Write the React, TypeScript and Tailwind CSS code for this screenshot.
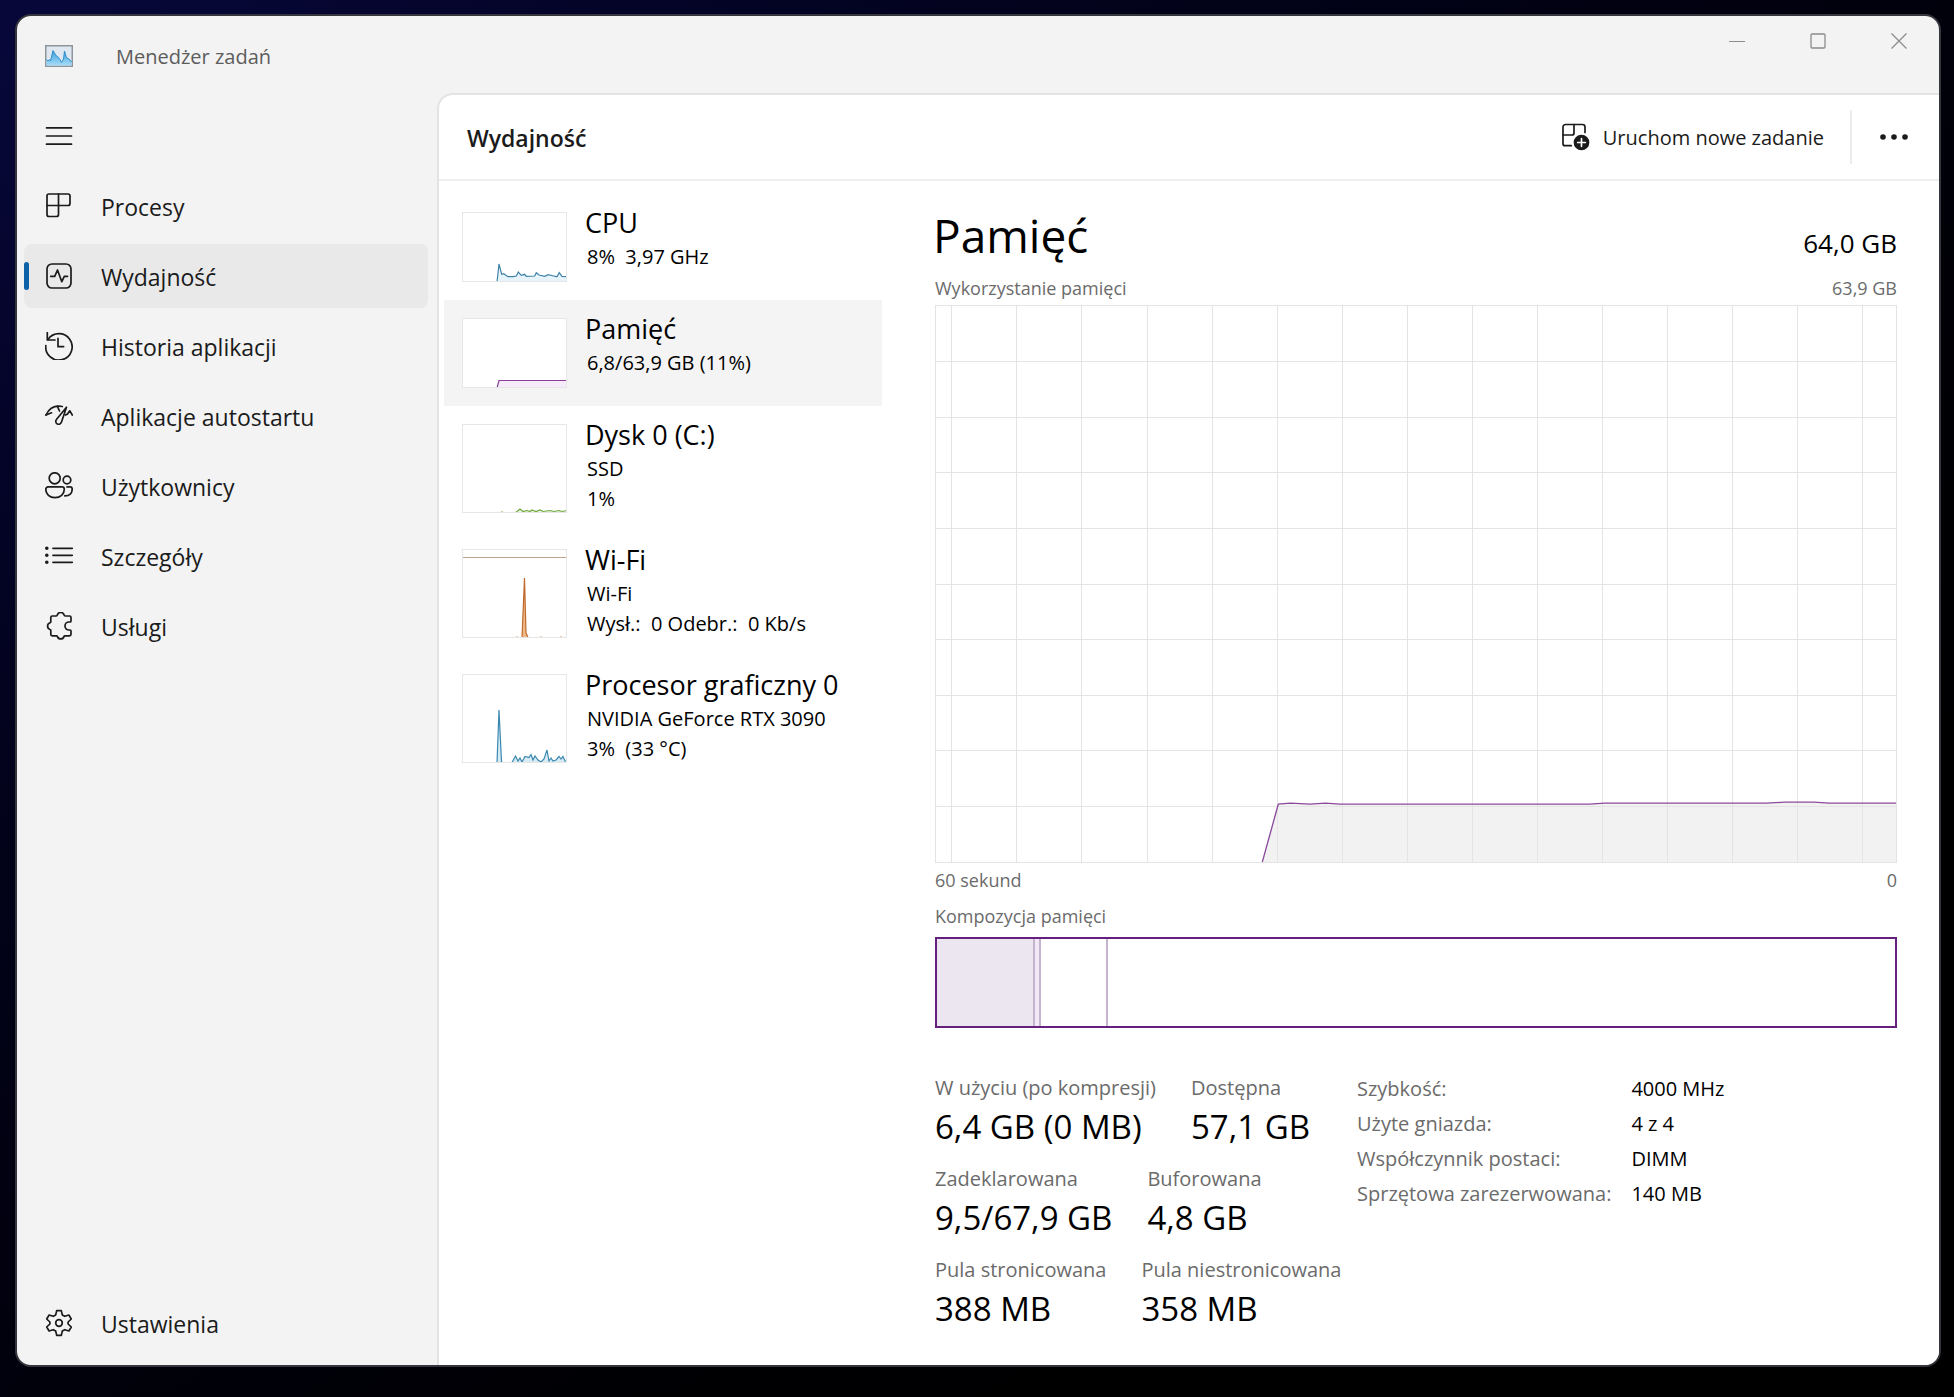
import { useState, type ReactNode } from "react";

const navIcons = {
  processes: (
    <>
      <path d="M4 2h19a2 2 0 0 1 2 2v7.5a2 2 0 0 1-2 2H13.5V22.500a2 2 0 0 1-2 2H4a2 2 0 0 1-2-2V4a2 2 0 0 1 2-2z" />
      <path d="M13.5 2v11.5H2" />
    </>
  ),
  performance: (
    <>
      <rect x="2" y="2" width="24" height="24" rx="5" />
      <path d="M5.7 14.3H9.700L12.5 8l4.3 11.7 2.5-5.4H22.5" />
    </>
  ),
  history: (
    <>
      <path d="M3 7.5A13.2 13.2 0 1 1 0.8 13.5" />
      <path d="M2.3 0.7V8H10" />
      <path d="M13 6.3v8.4h5.6" />
    </>
  ),
  startup: (
    <>
      <path d="M1 13C4 6.5 10 3.3 17.3 4.5" />
      <path d="M1 13l5.500-2.200" />
      <path d="M12.3 4.200L14.5 9" />
      <path d="M21.5 5.200L11.6 17.300a2.900 2.900 0 1 0 4.900 2.600z" />
      <path d="M22.3 12.200l2.400-3.400L27.3 13" />
      <path d="M20.5 13l1.800-.8" />
    </>
  ),
  users: (
    <>
      <circle cx="9.7" cy="6.3" r="5.5" />
      <circle cx="22" cy="8" r="3.8" />
      <path d="M3.200 14.900H17a2.300 2.300 0 0 1 2.300 2.300c0 5-4 8.500-9.300 8.500S.8 22.200.8 17.200a2.300 2.300 0 0 1 2.400-2.300z" />
      <path d="M22 14.900h3.200a2 2 0 0 1 2 2c0 4-2.700 6.800-7.400 7" />
    </>
  ),
  details: (
    <>
      <path d="M8 6.300H27.300M8 13.300H27.300M8 20.300H27.300" />
      <path d="M1.800 6.300h.01M1.800 13.300h.01M1.800 20.300h.01" strokeWidth="3.6" />
    </>
  ),
  services: (
    <path d="M7.300 4h3.900a1 1 0 0 0 1-.8a3.600 3.600 0 0 1 7 0a1 1 0 0 0 1 .8H24.500a1.500 1.500 0 0 1 1.500 1.500V9a1 1 0 0 1-1 1h-1a4 4 0 0 0 0 8h1a1 1 0 0 1 1 1v3.300a1.500 1.500 0 0 1-1.500 1.500H20a1 1 0 0 0-1 .8a3.500 3.500 0 0 1-6.600 0a1 1 0 0 0-1-.8H7.300a1.500 1.500 0 0 1-1.500-1.500V18.500a1 1 0 0 0-.8-1a3.600 3.600 0 0 1 0-6.800a1 1 0 0 0 .8-1V5.500A1.500 1.500 0 0 1 7.300 4z" />
  ),
  settings: (
    <>
      <path d="M11.700 1.600h4.600l1 4.300 2.500 1.400 4.100-1.300 2.400 4-3.200 3v2l3.200 3-2.400 4-4.100-1.300-2.500 1.400-1 4.300h-4.600l-1-4.300-2.500-1.400L4.100 22l-2.400-4 3.200-3v-2l-3.200-3 2.400-4 4.100 1.300 2.500-1.400z" />
      <circle cx="14" cy="14" r="3.3" />
    </>
  ),
};

type NavKey = keyof typeof navIcons;

const navItems: { key: NavKey; label: string }[] = [
  { key: "processes", label: "Procesy" },
  { key: "performance", label: "Wydajność" },
  { key: "history", label: "Historia aplikacji" },
  { key: "startup", label: "Aplikacje autostartu" },
  { key: "users", label: "Użytkownicy" },
  { key: "details", label: "Szczegóły" },
  { key: "services", label: "Usługi" },
];

type Resource = {
  id: string;
  name: string;
  lines: string[];
  height: number;
  points: string;
  stroke: string;
  fill: string;
  limit?: boolean;
};

const resources: Resource[] = [
  {
    id: "cpu",
    name: "CPU",
    lines: ["8%  3,97 GHz"],
    height: 70,
    points:
      "35,70 37,52 39.7,62.3 41.7,61.7 46,64.7 51,64.7 54.3,64 56.3,60 59.3,63.3 62.7,62.3 64.3,64.3 72.7,64 74.3,60.7 77,63 82.7,64.3 86,62.7 91.7,64 95,64.7 97.3,60.7 100,64.3 105,64.7",
    stroke: "#3f83a8",
    fill: "#e8f4fb",
  },
  {
    id: "mem",
    name: "Pamięć",
    lines: ["6,8/63,9 GB (11%)"],
    height: 70,
    points: "35,70 37,62.5 105,62.5",
    stroke: "#8b3f9b",
    fill: "#f6ebf9",
  },
  {
    id: "disk",
    name: "Dysk 0 (C:)",
    lines: ["SSD", "1%"],
    height: 89,
    points:
      "38,89 40,88 42,89 53,89 55,87.5 58,85 61,87.5 65,86.5 68,87.5 70,86 74,87.5 78,86 81,87.5 88,86.5 92,87.5 97,86.5 100,87.5 105,86.5",
    stroke: "#6fa83a",
    fill: "#eef6e6",
  },
  {
    id: "wifi",
    name: "Wi-Fi",
    lines: ["Wi-Fi", "Wysł.:  0 Odebr.:  0 Kb/s"],
    height: 89,
    points: "54,89 55,88 56,89 60,89 62.5,29 64,84 65,86 66,89 78,89 79,88 80,89 98,89 99,88 100,89",
    stroke: "#bf6a2c",
    fill: "#f0b98a",
    limit: true,
  },
  {
    id: "gpu",
    name: "Procesor graficzny 0",
    lines: ["NVIDIA GeForce RTX 3090", "3%  (33 °C)"],
    height: 89,
    points:
      "35,89 37,36 39.5,88 41,88.5 46,88.5 50,88.5 53.5,82 56,87 58,84 60,88 63,82.5 67,83.5 69,80.5 71,86 73,82 76,86 79,88 82,85 85,76 87,87 89,84 91,87 94,86 97,82.5 99,85 101,82.5 103,87 105,87",
    stroke: "#3b88b0",
    fill: "#d7ebf5",
  },
];

// share of the installed memory, in percent
const composition = [
  { id: "used", share: 10.2, style: "bg-[#ece6f1]" },
  { id: "modified", share: 0.7, style: "bg-[#f3e8f6]" },
  { id: "standby", share: 7, style: "bg-white" },
];

const stats = [
  [
    { label: "W użyciu (po kompresji)", value: "6,4 GB (0 MB)" },
    { label: "Dostępna", value: "57,1 GB" },
  ],
  [
    { label: "Zadeklarowana", value: "9,5/67,9 GB" },
    { label: "Buforowana", value: "4,8 GB" },
  ],
  [
    { label: "Pula stronicowana", value: "388 MB" },
    { label: "Pula niestronicowana", value: "358 MB" },
  ],
];

const specs = [
  ["Szybkość:", "4000 MHz"],
  ["Użyte gniazda:", "4 z 4"],
  ["Współczynnik postaci:", "DIMM"],
  ["Sprzętowa zarezerwowana:", "140 MB"],
];

function Icon({ children }: { children: ReactNode }) {
  return (
    <svg
      viewBox="0 0 28 28"
      className="h-7 w-7 shrink-0"
      fill="none"
      stroke="#1b1b1b"
      strokeWidth="1.7"
      strokeLinecap="round"
      strokeLinejoin="round"
      aria-hidden="true"
    >
      {children}
    </svg>
  );
}

function NavButton({ icon, label, active, onClick }: { icon: NavKey; label: string; active: boolean; onClick: () => void }) {
  return (
    <button
      type="button"
      onClick={onClick}
      className={`relative flex h-16 w-full items-center gap-7 rounded-lg pl-[21px] text-left text-[23px] ${
        active ? "bg-[#e9e9e9]" : "hover:bg-[#ececec]"
      }`}
    >
      {active && <span className="absolute left-0 h-7 w-[5px] rounded-full bg-[#0f62a8]" />}
      <Icon>{navIcons[icon]}</Icon>
      <span className="pt-0.5">{label}</span>
    </button>
  );
}

function Thumb({ r }: { r: Resource }) {
  return (
    <svg
      width="105"
      height={r.height}
      viewBox={`0 0 105 ${r.height}`}
      className="shrink-0 bg-white outline outline-1 -outline-offset-1 outline-[#e6e6e6]"
      aria-hidden="true"
    >
      <polygon points={`${r.points} 105,${r.height} 35,${r.height}`} fill={r.fill} />
      {r.limit && <path d="M0 8.5H105" stroke="#c0a58c" />}
      <polyline points={r.points} fill="none" stroke={r.stroke} strokeWidth="1.2" />
    </svg>
  );
}

// columns are scrolled 16px to the right, 10 rows
const gridX = Array.from({ length: 15 }, (_, i) => 16 + i * 65.15);
const gridY = Array.from({ length: 9 }, (_, i) => (i + 1) * 55.8);
const memoryLine =
  "327,558 343,500 355,499 375,500 390,499 405,500 655,500 670,499 832,499 850,498 880,498 895,499 962,499";

function MemoryChart() {
  return (
    <svg
      viewBox="0 0 962 558"
      preserveAspectRatio="none"
      className="mt-[5px] block h-[558px] w-full border border-[#e4e4e4]"
      role="img"
      aria-label="Wykorzystanie pamięci"
    >
      <polygon points={`${memoryLine} 962,558`} fill="#f3f2f3" />
      <g stroke="#e4e4e4" shapeRendering="crispEdges">
        {gridX.map((x) => (
          <line key={x} x1={x} x2={x} y1="0" y2="558" />
        ))}
        {gridY.map((y) => (
          <line key={y} x1="0" x2="962" y1={y} y2={y} />
        ))}
      </g>
      <polyline points={memoryLine} fill="none" stroke="#8a4a9c" strokeWidth="1.3" />
    </svg>
  );
}

function TitleBar() {
  const btn = "flex h-[49px] w-[81px] items-center justify-center hover:bg-[#e5e5e5]";
  return (
    <header className="flex h-[77px] shrink-0 items-start justify-between">
      <div className="flex h-20 items-center gap-[43px] pl-7">
        <svg width="28" height="22" viewBox="0 0 28 22" aria-hidden="true">
          <defs>
            <linearGradient id="app-icon" x1="0" y1="0" x2="0" y2="1">
              <stop offset="0" stopColor="#3a9fdc" />
              <stop offset="1" stopColor="#a5dcf8" />
            </linearGradient>
          </defs>
          <rect x="0.75" y="0.75" width="26.5" height="20.5" fill="#dfe8f1" stroke="#8f959c" strokeWidth="1.5" />
          <path
            d="M1.500 20.500V14.500L3 16l1.500-1.500L5.500 16 8 5.500l3 5 1.500 1L15 14.500l1.500 3L18.500 14l1-8 2 7 2 .5 3 3.500v3.500z"
            fill="url(#app-icon)"
          />
          <path
            d="M1.500 14.500L3 16l1.500-1.500L5.500 16 8 5.500l3 5 1.500 1L15 14.500l1.500 3L18.500 14l1-8 2 7 2 .5 3 3.500"
            fill="none"
            stroke="#2f8fcb"
          />
        </svg>
        <h1 className="pt-0.5 text-[20px] text-[#5c5c5c]">Menedżer zadań</h1>
      </div>
      <div className="flex">
        <button type="button" aria-label="Minimalizuj" className={btn}>
          <svg width="16" height="16" fill="none" stroke="#8c8c8c">
            <path d="M0 8.5h16" />
          </svg>
        </button>
        <button type="button" aria-label="Maksymalizuj" className={btn}>
          <svg width="16" height="16" fill="none" stroke="#8c8c8c" strokeWidth="1.3">
            <rect x="1" y="1" width="14" height="14" rx="1" />
          </svg>
        </button>
        <button type="button" aria-label="Zamknij" className={btn}>
          <svg width="16" height="16" fill="none" stroke="#8c8c8c" strokeWidth="1.3">
            <path d="M.5.5l15 15M15.5.5l-15 15" />
          </svg>
        </button>
      </div>
    </header>
  );
}

export default function App() {
  const [page, setPage] = useState<NavKey>("performance");
  const [resource, setResource] = useState("mem");

  return (
    <div className="flex min-h-screen flex-col bg-linear-to-br from-[#07083a] via-[#02021a] via-30% to-black pt-[14px] pr-[13px] pb-[30px] pl-[15px] font-['Open_Sans',sans-serif] text-[#1b1b1b]">
      <div className="flex flex-1 flex-col overflow-hidden rounded-2xl border-2 border-[#35353d] bg-[#f3f3f3]">
        <TitleBar />
        <div className="flex flex-1">
          <nav className="flex w-[420px] shrink-0 flex-col pr-[9px] pb-[10px] pl-[7px]">
            <button
              type="button"
              aria-label="Menu"
              className="mt-[11px] mb-[6px] flex h-16 w-[70px] items-center justify-center rounded-lg"
            >
              <Icon>
                <path d="M1.500 5.800h25M1.500 14h25M1.500 22.200h25" />
              </Icon>
            </button>
            <div className="flex flex-1 flex-col gap-[6px]">
              {navItems.map((item) => (
                <NavButton
                  key={item.key}
                  icon={item.key}
                  label={item.label}
                  active={page === item.key}
                  onClick={() => setPage(item.key)}
                />
              ))}
            </div>
            <NavButton
              icon="settings"
              label="Ustawienia"
              active={page === "settings"}
              onClick={() => setPage("settings")}
            />
          </nav>

          <main className="flex min-w-0 flex-1 flex-col rounded-tl-2xl border-t-2 border-l-2 border-[#e3e3e3] bg-white">
            <div className="flex h-[86px] shrink-0 items-center border-b-2 border-[#efefef] pr-[30px] pl-7">
              <h2 className="flex-1 pt-0.5 text-[23px] font-semibold">Wydajność</h2>
              <button type="button" className="flex items-center gap-[13px] text-[20px]">
                <Icon>
                  <path d="M9.300 22.700H3a2 2 0 0 1-2-2V4a2.500 2.500 0 0 1 2.500-2.500h17A2.500 2.500 0 0 1 23 4v5.500" />
                  <path d="M12 1.500V10a2 2 0 0 1-2 2H1" />
                  <circle cx="19.5" cy="19.5" r="7" fill="#1b1b1b" />
                  <path d="M19.500 15.700v7.600M15.700 19.500h7.600" stroke="#fff" />
                </Icon>
                <span className="pt-0.5">Uruchom nowe zadanie</span>
              </button>
              <div className="mr-[27px] ml-[26px] h-[54px] w-0.5 bg-[#ececec]" />
              <button type="button" aria-label="Więcej opcji" className="flex h-10 items-center">
                <svg width="30" height="8" fill="#1b1b1b">
                  <circle cx="4" cy="4" r="2.8" />
                  <circle cx="15" cy="4" r="2.8" />
                  <circle cx="26" cy="4" r="2.8" />
                </svg>
              </button>
            </div>

            <div className="flex flex-1">
              <ul className="w-[443px] shrink-0 pt-[13px] pl-[5px]">
                {resources.map((r) => (
                  <li key={r.id}>
                    <button
                      type="button"
                      onClick={() => setResource(r.id)}
                      className={`flex w-full items-start gap-[18px] py-[18px] pl-[18px] text-left text-black ${
                        resource === r.id ? "bg-[#f4f4f4]" : ""
                      }`}
                    >
                      <Thumb r={r} />
                      {/* the text may run past the thumbnail without growing the row */}
                      <span className="h-[70px] whitespace-pre">
                        <span className="mb-2 block text-[27px] leading-[22px]">{r.name}</span>
                        {r.lines.map((line) => (
                          <span key={line} className="block pl-0.5 text-[20px] leading-[30px]">
                            {line}
                          </span>
                        ))}
                      </span>
                    </button>
                  </li>
                ))}
              </ul>

              <section className="min-w-0 flex-1 pt-6 pr-[42px] pl-[53px]">
                <div className="-ml-0.5 flex items-baseline justify-between text-black">
                  <h3 className="text-[46px] leading-[60px]">Pamięć</h3>
                  <span className="text-[26px]">64,0 GB</span>
                </div>
                <div className="mt-[11px] flex justify-between text-[18px] leading-6 text-[#6b6b6b]">
                  <span>Wykorzystanie pamięci</span>
                  <span>63,9 GB</span>
                </div>
                <MemoryChart />
                <div className="mt-[5px] flex justify-between text-[18px] leading-6 text-[#6b6b6b]">
                  <span>60 sekund</span>
                  <span>0</span>
                </div>
                <div className="mt-3 text-[18px] leading-6 text-[#6b6b6b]">Kompozycja pamięci</div>
                <div className="mt-[9px] flex h-[91px] border-2 border-[#651f7d]">
                  {composition.map((c) => (
                    <div key={c.id} className={`border-r-2 border-[#c6b5ce] ${c.style}`} style={{ width: `${c.share}%` }} />
                  ))}
                </div>

                <div className="mt-[43px] flex gap-5">
                  <div className="flex w-[402px] shrink-0 flex-col gap-[13px]">
                    {stats.map((row) => (
                      <dl key={row[0].label} className="flex gap-[35px] whitespace-nowrap">
                        {row.map((s) => (
                          <div key={s.label}>
                            <dt className="text-[20px] leading-[34px] text-[#6b6b6b]">{s.label}</dt>
                            <dd className="text-[33px] leading-[44px] text-black">{s.value}</dd>
                          </div>
                        ))}
                      </dl>
                    ))}
                  </div>
                  <table className="h-fit text-left text-[20px] leading-[35px] whitespace-nowrap">
                    <tbody>
                      {specs.map(([label, value]) => (
                        <tr key={label}>
                          <th scope="row" className="p-0 pr-5 font-normal text-[#6b6b6b]">
                            {label}
                          </th>
                          <td className="p-0 text-black">{value}</td>
                        </tr>
                      ))}
                    </tbody>
                  </table>
                </div>
              </section>
            </div>
          </main>
        </div>
      </div>
    </div>
  );
}
